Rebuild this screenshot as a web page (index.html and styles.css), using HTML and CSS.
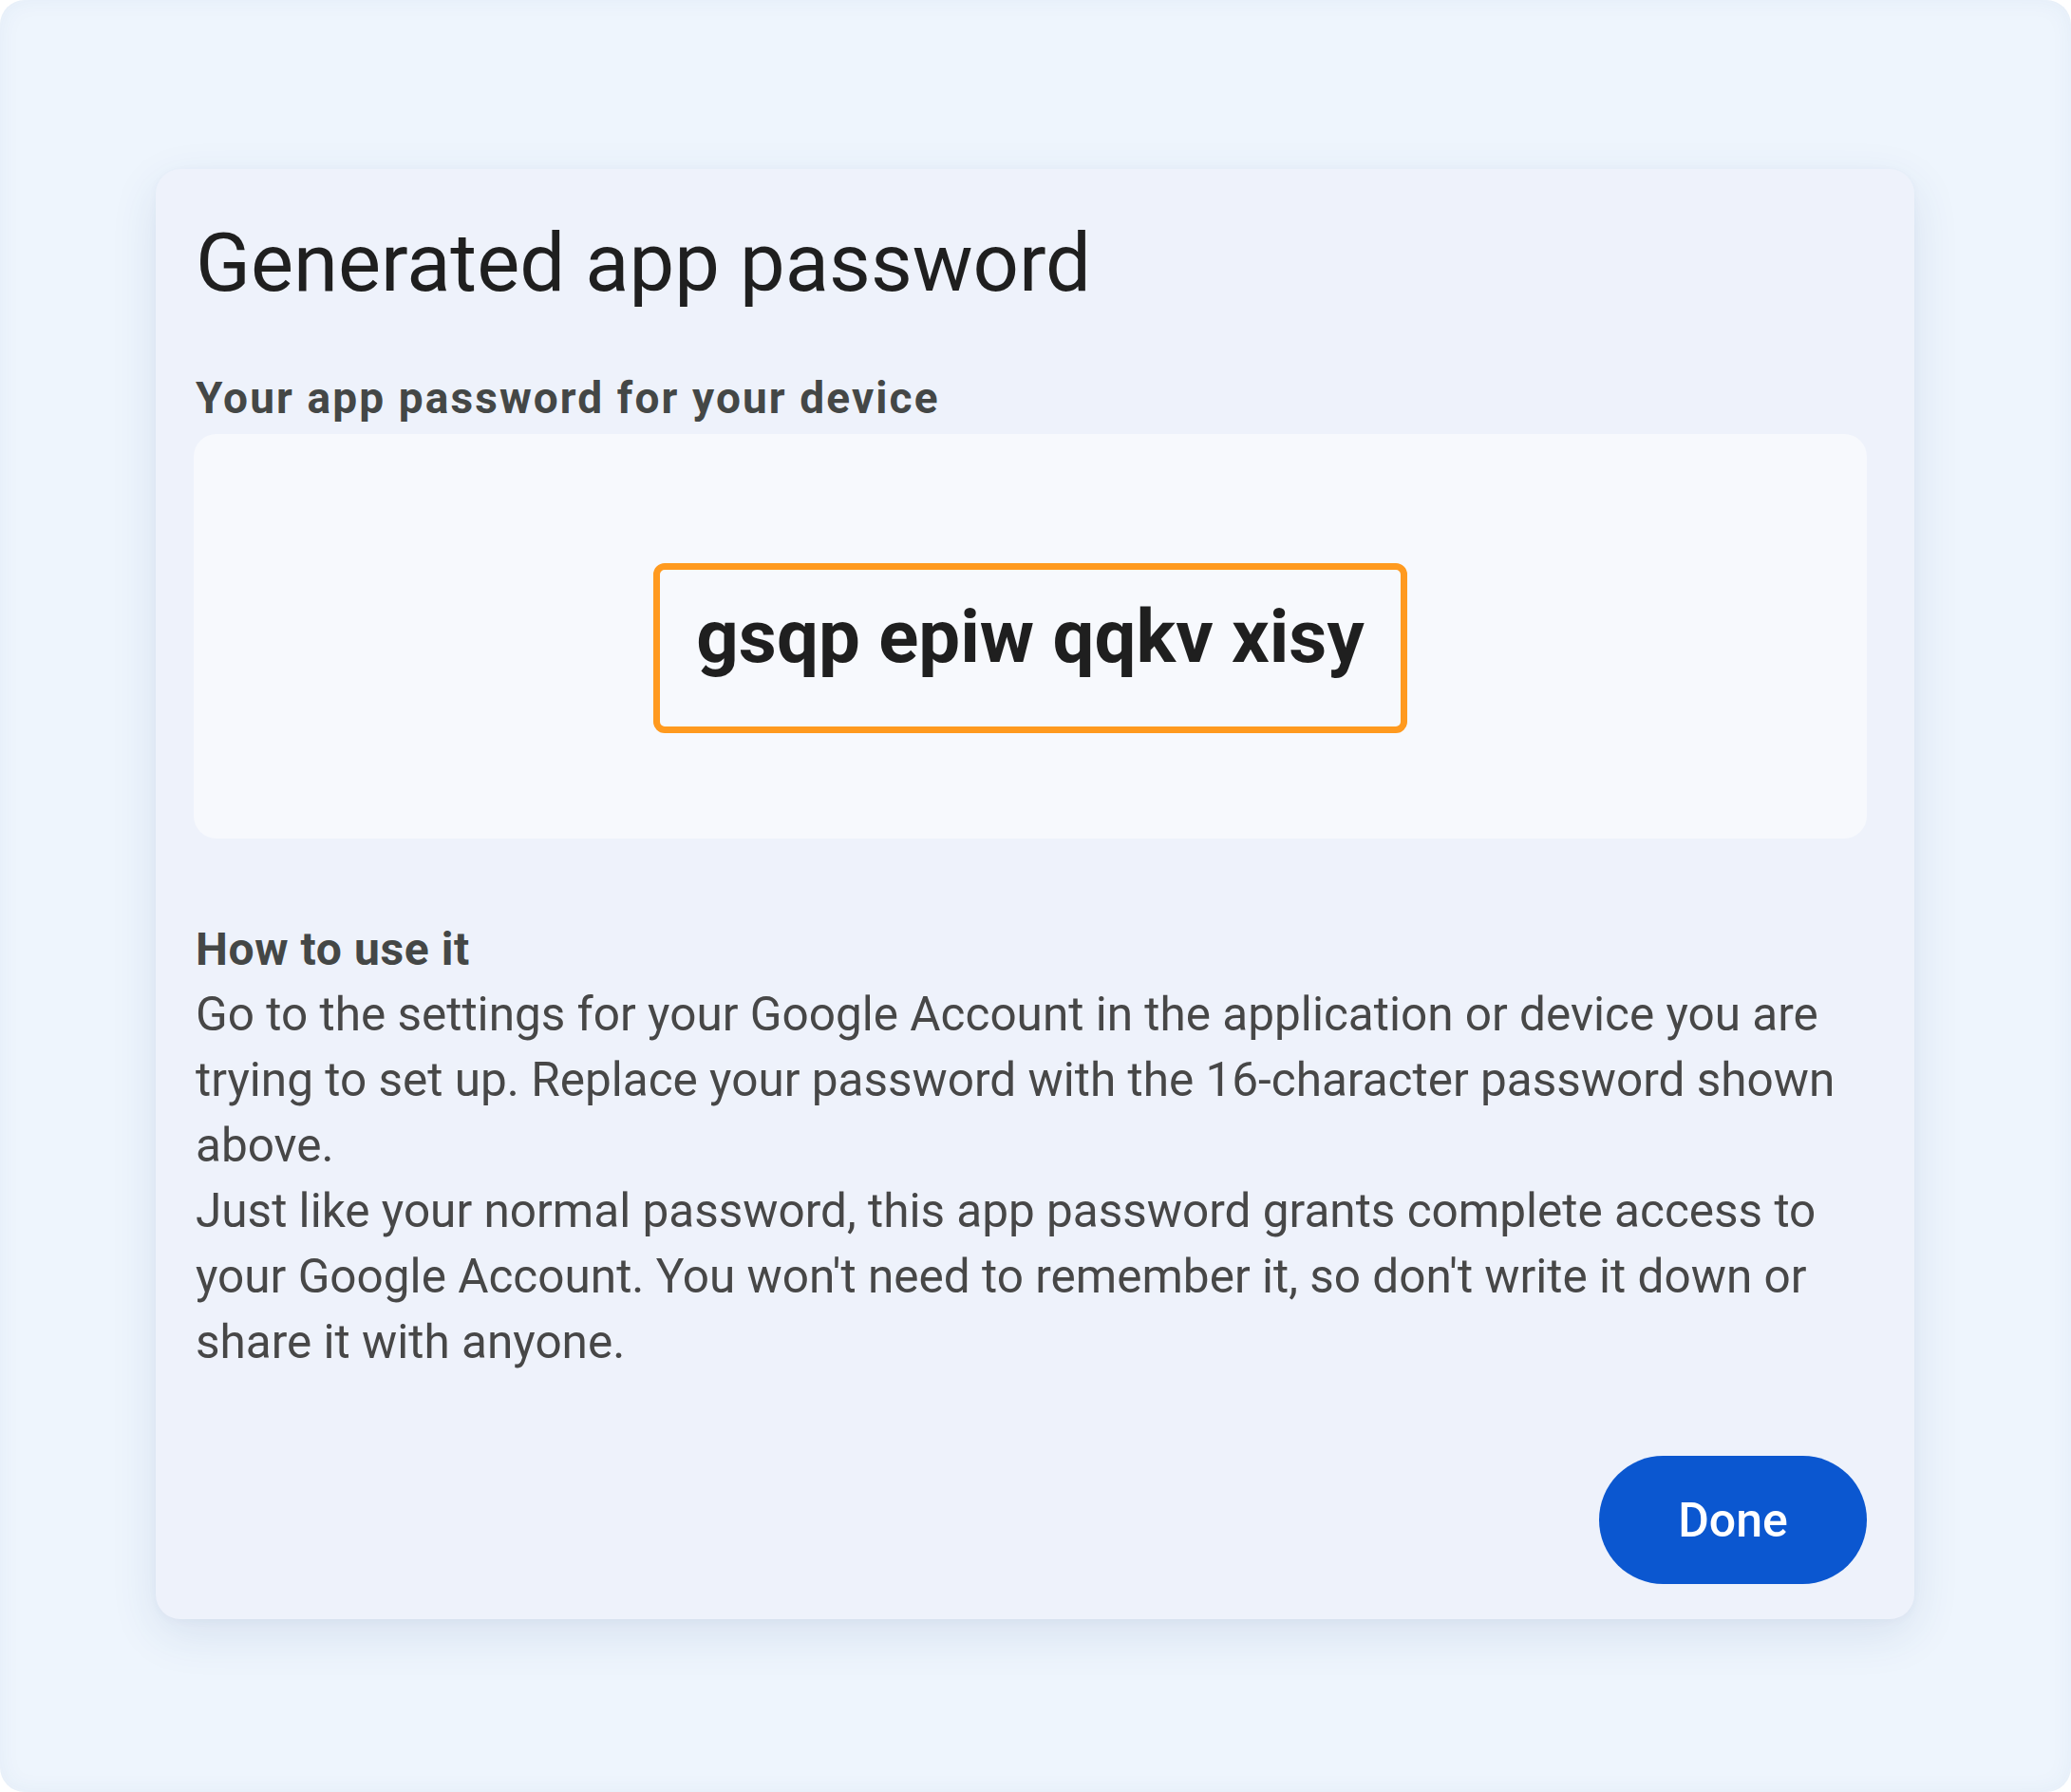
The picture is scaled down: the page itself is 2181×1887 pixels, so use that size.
FILE: index.html
```html
<!DOCTYPE html>
<html lang="en">
<head>
<meta charset="utf-8">
<title>Generated app password</title>
<link rel="stylesheet" href="styles.css">
</head>
<body>
  <div class="frame">
    <section class="dialog">
      <h1 class="dialog-title">Generated app password</h1>
      <h2 class="dialog-label">Your app password for your device</h2>
      <div class="password-panel">
        <div class="password-highlight">
          <span class="password-text">gsqp epiw qqkv xisy</span>
        </div>
      </div>
      <div class="howto">
        <h3 class="howto-title">How to use it</h3>
        <p class="howto-text">Go to the settings for your Google Account in the application or device you are trying to set up. Replace your password with the 16-character password shown above.</p>
        <p class="howto-text">Just like your normal password, this app password grants complete access to your Google Account. You won't need to remember it, so don't write it down or share it with anyone.</p>
      </div>
      <div class="actions">
        <button class="btn-done" type="button">Done</button>
      </div>
    </section>
  </div>
</body>
</html>
```
FILE: styles.css
```css
html, body {
  margin: 0;
  padding: 0;
  background: #ffffff;
}

body {
  width: 2181px;
  height: 1887px;
  font-family: Roboto, "Noto Sans", "Liberation Sans", sans-serif;
}

.frame {
  box-sizing: border-box;
  width: 2181px;
  height: 1887px;
  border-radius: 26px;
  background: #eef5fd;
  box-shadow: inset 0 0 24px rgba(40, 80, 140, 0.05);
  padding: 178px 165px 0 164px;
}

.dialog {
  box-sizing: border-box;
  width: 1852px;
  background: #eef2fb;
  border-radius: 26px;
  padding: 49px 50px 37px 40px;
  box-shadow: 0 16px 50px rgba(40, 70, 130, 0.11), 0 2px 8px rgba(40, 70, 130, 0.04);
}

.dialog-title {
  margin: 0 0 0 2px;
  font-size: 85px;
  line-height: 100px;
  font-weight: 400;
  color: #1f1f1f;
  letter-spacing: 0;
}

.dialog-label {
  margin: 62px 0 0 2px;
  font-size: 46px;
  line-height: 60px;
  font-weight: 700;
  color: #444746;
  letter-spacing: 2.1px;
}

.password-panel {
  margin-top: 8px;
  background: #f7f9fd;
  border-radius: 24px;
  padding: 136px 0 111px;
  display: flex;
  justify-content: center;
}

.password-highlight {
  border: 7px solid #ff9a1f;
  border-radius: 12px;
  padding: 33px 38px 56px;
}

.password-text {
  display: block;
  font-size: 78px;
  line-height: 76px;
  font-weight: 700;
  color: #1f1f1f;
  letter-spacing: 0;
  white-space: nowrap;
}

.howto {
  margin-top: 82px;
  padding-left: 2px;
  color: #474747;
  font-size: 49.5px;
  line-height: 69px;
}

.howto-title {
  margin: 0;
  font-size: 48px;
  line-height: 69px;
  font-weight: 700;
  color: #444746;
  letter-spacing: 0.6px;
}

.howto-text {
  margin: 0;
}

.actions {
  margin-top: 85px;
  display: flex;
  justify-content: flex-end;
}

.btn-done {
  width: 282px;
  height: 135px;
  border: none;
  border-radius: 68px;
  background: #0b57d0;
  color: #ffffff;
  font-family: Roboto, "Noto Sans", "Liberation Sans", sans-serif;
  font-size: 50px;
  font-weight: 500;
  padding: 0;
  cursor: pointer;
}
```
